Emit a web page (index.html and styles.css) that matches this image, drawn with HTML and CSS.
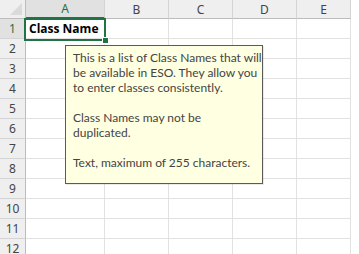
FILE: index.html
```html
<!DOCTYPE html>
<html>
<head>
<meta charset="utf-8">
<link rel="stylesheet" href="styles.css">
</head>
<body>
<div class="sheet">
  <div class="grid">
    <div class="corner"><span class="tri"></span></div>
    <div class="colh sel">A</div>
    <div class="colh">B</div>
    <div class="colh">C</div>
    <div class="colh">D</div>
    <div class="colh">E</div>

    <div class="rowh sel">1</div><div class="cell bold">Class Name</div><div class="cell"></div><div class="cell"></div><div class="cell"></div><div class="cell"></div>
    <div class="rowh">2</div><div class="cell"></div><div class="cell"></div><div class="cell"></div><div class="cell"></div><div class="cell"></div>
    <div class="rowh">3</div><div class="cell"></div><div class="cell"></div><div class="cell"></div><div class="cell"></div><div class="cell"></div>
    <div class="rowh">4</div><div class="cell"></div><div class="cell"></div><div class="cell"></div><div class="cell"></div><div class="cell"></div>
    <div class="rowh">5</div><div class="cell"></div><div class="cell"></div><div class="cell"></div><div class="cell"></div><div class="cell"></div>
    <div class="rowh">6</div><div class="cell"></div><div class="cell"></div><div class="cell"></div><div class="cell"></div><div class="cell"></div>
    <div class="rowh">7</div><div class="cell"></div><div class="cell"></div><div class="cell"></div><div class="cell"></div><div class="cell"></div>
    <div class="rowh">8</div><div class="cell"></div><div class="cell"></div><div class="cell"></div><div class="cell"></div><div class="cell"></div>
    <div class="rowh">9</div><div class="cell"></div><div class="cell"></div><div class="cell"></div><div class="cell"></div><div class="cell"></div>
    <div class="rowh">10</div><div class="cell"></div><div class="cell"></div><div class="cell"></div><div class="cell"></div><div class="cell"></div>
    <div class="rowh">11</div><div class="cell"></div><div class="cell"></div><div class="cell"></div><div class="cell"></div><div class="cell"></div>
    <div class="rowh">12</div><div class="cell"></div><div class="cell"></div><div class="cell"></div><div class="cell"></div><div class="cell"></div>
  </div>
  <div class="selection"><span class="handle"></span></div>
  <div class="tip">
    <p>This is a list of Class Names that will<br>be available in ESO. They allow you<br>to enter classes consistently.</p>
    <p>Class Names may not be<br>duplicated.</p>
    <p>Text, maximum of 255 characters.</p>
  </div>
</div>
</body>
</html>
```

FILE: styles.css
```css
html, body {
  margin: 0;
  padding: 0;
  background: #ffffff;
}
.sheet {
  position: relative;
  width: 359px;
  height: 254px;
  overflow: hidden;
  font-family: "Noto Sans", "Open Sans", sans-serif;
}
.grid {
  display: grid;
  grid-template-columns: 26px 79px 64px 64px 64px 54px;
  grid-template-rows: 19px;
  grid-auto-rows: 20px;
}
.grid > div {
  box-sizing: border-box;
}
.corner {
  background: #efefef;
  border-right: 1px solid #bcbcbc;
  border-bottom: 1px solid #bcbcbc;
  position: relative;
}
.tri {
  position: absolute;
  right: 3px;
  bottom: 3px;
  width: 0;
  height: 0;
  border-left: 12px solid transparent;
  border-bottom: 12px solid #dadada;
}
.colh {
  background: #efefef;
  border-right: 1px solid #d4d4d4;
  border-bottom: 1px solid #bcbcbc;
  color: #444444;
  font-size: 12px;
  display: flex;
  align-items: center;
  justify-content: center;
}
.colh.sel {
  background: #e1e1e1;
  color: #217346;
  border-bottom: 2px solid #217346;
}
.rowh {
  background: #efefef;
  border-right: 1px solid #bcbcbc;
  border-bottom: 1px solid #d4d4d4;
  color: #444444;
  font-size: 12px;
  display: flex;
  align-items: center;
  justify-content: center;
}
.rowh.sel {
  background: #e1e1e1;
  color: #217346;
}
.cell {
  border-right: 1px solid #e1e1e1;
  border-bottom: 1px solid #e1e1e1;
}
.cell.bold {
  font-family: "Open Sans", sans-serif;
  font-weight: 700;
  font-size: 12px;
  color: #000000;
  display: flex;
  align-items: center;
  padding-left: 3px;
  white-space: nowrap;
}
.selection {
  position: absolute;
  left: 24px;
  top: 18px;
  width: 82px;
  height: 23px;
  box-sizing: border-box;
  border: 2px solid #217346;
}
.handle {
  position: absolute;
  right: -5px;
  bottom: -5px;
  width: 5px;
  height: 5px;
  background: #217346;
  border: 1px solid #ffffff;
}
.tip {
  position: absolute;
  left: 65px;
  top: 45px;
  width: 198px;
  height: 139px;
  box-sizing: border-box;
  background: #ffffe1;
  border: 1px solid #5a5a5a;
  box-shadow: 1px 1px 0 rgba(0,0,0,0.08);
  padding: 4px 4px 0 7px;
  font-family: Lato, "Noto Sans", sans-serif;
  font-size: 12px;
  line-height: 15px;
  color: #444444;
  white-space: nowrap;
}
.tip p {
  margin: 0 0 15px 0;
}
```
